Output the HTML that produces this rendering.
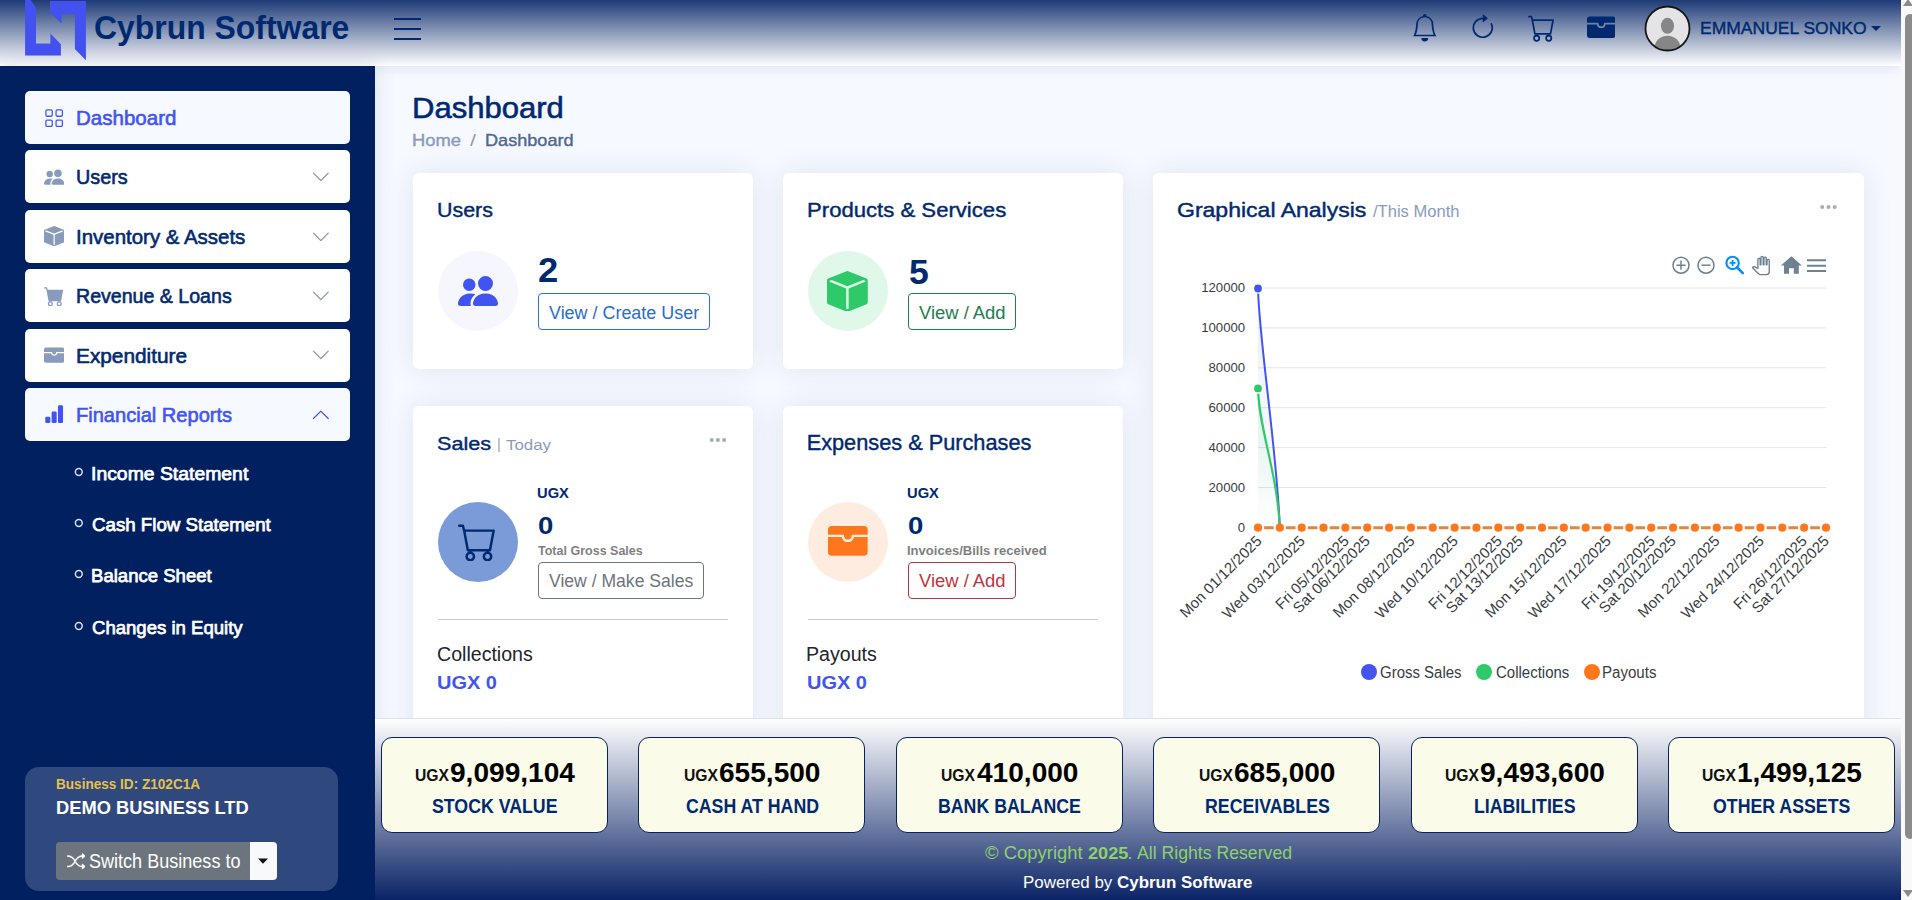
<!DOCTYPE html>
<html><head><meta charset="utf-8"><style>
html,body{margin:0;padding:0;width:1912px;height:900px;overflow:hidden;background:#f6f9ff;font-family:"Liberation Sans",sans-serif}
.abs{position:absolute}
.t{position:absolute;white-space:nowrap}
#hdr{position:absolute;left:0;top:0;width:1901px;height:66px;background:linear-gradient(to bottom,#1e3b77 0%,#ffffff 100%);box-shadow:0 2px 12px rgba(1,41,112,0.10)}
#side{position:absolute;left:0;top:66px;width:375px;height:834px;background:#012060;box-shadow:0 0 20px rgba(1,41,112,0.12)}
.card{position:absolute;background:#fff;border-radius:6px;box-shadow:0 0 30px rgba(1,41,112,0.10)}
#foot{position:absolute;left:375px;top:718px;width:1526px;height:182px;background:linear-gradient(to bottom,#ffffff 0%,#0a2366 100%);border-top:1px solid #d9e1ee;box-sizing:border-box}
.stat{position:absolute;top:737px;width:227px;height:96px;box-sizing:border-box;background:#fafbe9;border:1.5px solid #0c2158;border-radius:11px}
</style></head><body>
<div id="hdr"></div>
<svg class="abs" style="left:0;top:0" width="100" height="66" viewBox="0 0 100 66">
<polygon fill="#4351f0" points="25.1,0 30.6,0 36,7.8 36,43.5 50.4,43.5 50.4,33.4 60.9,44.3 60.9,55.6 25.1,55.6"/>
<polygon fill="#4351f0" points="50,1 85.9,1 85.9,60.3 74.9,49 74.9,14 61.6,14 61.6,23.6 50,12.6"/>
</svg>
<div class="t" style="left:94.32px;top:11.51px;font-size:32.75px;line-height:32.75px;font-weight:700;color:#012970;transform:scaleX(0.9743);transform-origin:0 0;">Cybrun Software</div>
<div class="abs" style="left:394px;top:18px;width:27px;height:2px;background:#012970"></div>
<div class="abs" style="left:394px;top:28px;width:27px;height:2px;background:#012970"></div>
<div class="abs" style="left:394px;top:38px;width:27px;height:2px;background:#012970"></div>
<svg class="abs" style="left:1410.80px;top:14.00px;" width="27.52" height="27.52" viewBox="0 0 16 16"><path fill="#012970" d="M8 16a2 2 0 0 0 2-2H6a2 2 0 0 0 2 2M8 1.918l-.797.161A4 4 0 0 0 4 6c0 .628-.134 2.197-.459 3.742-.16.767-.376 1.566-.663 2.258h10.244c-.287-.692-.502-1.49-.663-2.258C12.134 8.197 12 6.628 12 6a4 4 0 0 0-3.203-3.92zM14.22 12c.223.447.481.801.78 1H1c.299-.199.557-.553.78-1C2.68 10.2 3 6.88 3 6c0-2.42 1.72-4.44 4.005-4.901a1 1 0 1 1 1.99 0A5 5 0 0 1 13 6c0 .88.32 4.2 1.22 6"/></svg>
<svg class="abs" style="left:1468.90px;top:14.05px;" width="27.52" height="27.52" viewBox="0 0 16 16"><path fill="#012970" d="M8 3a5 5 0 1 0 4.546 2.914.5.5 0 0 1 .908-.417A6 6 0 1 1 8 2zM8 4.466V.534a.25.25 0 0 1 .41-.192l2.36 1.966c.12.1.12.284 0 .384L8.41 4.658A.25.25 0 0 1 8 4.466"/></svg>
<svg class="abs" style="left:1528.00px;top:14.10px;" width="27.68" height="27.68" viewBox="0 0 16 16"><path fill="#012970" d="M0 1.5A.5.5 0 0 1 .5 1H2a.5.5 0 0 1 .485.379L2.89 3H14.5a.5.5 0 0 1 .491.592l-1.5 8A.5.5 0 0 1 13 12H4a.5.5 0 0 1-.491-.408L2.01 3.607 1.61 2H.5a.5.5 0 0 1-.5-.5M3.102 4l1.313 7h8.17l1.313-7zM5 12a2 2 0 1 0 0 4 2 2 0 0 0 0-4m7 0a2 2 0 1 0 0 4 2 2 0 0 0 0-4m-7 1a1 1 0 1 1 0 2 1 1 0 0 1 0-2m7 0a1 1 0 1 1 0 2 1 1 0 0 1 0-2"/></svg>
<svg class="abs" style="left:1586.50px;top:13.40px;" width="28.48" height="28.48" viewBox="0 0 16 16"><path fill="#012970" d="M1.5 2A1.5 1.5 0 0 0 0 3.5v2h6a.5.5 0 0 1 .5.5c0 .253.08.644.306.958.207.288.557.542 1.194.542s.987-.254 1.194-.542C9.42 6.644 9.5 6.253 9.5 6a.5.5 0 0 1 .5-.5h6v-2A1.5 1.5 0 0 0 14.5 2zM16 6.5h-5.551a2.7 2.7 0 0 1-.443 1.042C9.613 8.088 8.963 8.5 8 8.5s-1.613-.412-2.006-.958A2.7 2.7 0 0 1 5.551 6.5H0v6A1.5 1.5 0 0 0 1.5 14h13a1.5 1.5 0 0 0 1.5-1.5z"/></svg>
<svg class="abs" style="left:1644px;top:5px" width="47" height="47" viewBox="0 0 47 47">
<defs><clipPath id="av"><circle cx="23.5" cy="23.5" r="21.5"/></clipPath></defs>
<circle cx="23.5" cy="23.5" r="22" fill="#e4e4e6"/>
<g clip-path="url(#av)" fill="#868686"><ellipse cx="23.5" cy="20.8" rx="6.6" ry="8"/><ellipse cx="23.5" cy="43.2" rx="13" ry="12.5"/></g>
<circle cx="23.5" cy="23.5" r="22" fill="none" stroke="#151515" stroke-width="1.8"/>
</svg>
<div class="t" style="left:1700.10px;top:20.31px;font-size:17.10px;line-height:17.10px;font-weight:400;color:#012970;transform:scaleX(1.0238);transform-origin:0 0;-webkit-text-stroke:0.4px currentColor;">EMMANUEL SONKO</div>
<svg class="abs" style="left:1870px;top:25px" width="12" height="7"><path d="M1 1h10L6 6z" fill="#012970"/></svg>
<div id="side"></div>
<div class="abs" style="left:25px;top:91.0px;width:325px;height:53px;background:#f6f9ff;border-radius:5px"></div>
<div class="t" style="left:75.96px;top:107.90px;font-size:20.29px;line-height:20.29px;font-weight:400;color:#4154f1;transform:scaleX(1.0117);transform-origin:0 0;-webkit-text-stroke:0.6px currentColor;">Dashboard</div>
<svg class="abs" style="left:43.80px;top:107.80px;" width="20.32" height="20.32" viewBox="0 0 16 16"><path fill="#4154f1" d="M1 2.5A1.5 1.5 0 0 1 2.5 1h3A1.5 1.5 0 0 1 7 2.5v3A1.5 1.5 0 0 1 5.5 7h-3A1.5 1.5 0 0 1 1 5.5zM2.5 2a.5.5 0 0 0-.5.5v3a.5.5 0 0 0 .5.5h3a.5.5 0 0 0 .5-.5v-3a.5.5 0 0 0-.5-.5zm6.5.5A1.5 1.5 0 0 1 10.5 1h3A1.5 1.5 0 0 1 15 2.5v3A1.5 1.5 0 0 1 13.5 7h-3A1.5 1.5 0 0 1 9 5.5zm1.5-.5a.5.5 0 0 0-.5.5v3a.5.5 0 0 0 .5.5h3a.5.5 0 0 0 .5-.5v-3a.5.5 0 0 0-.5-.5zM1 10.5A1.5 1.5 0 0 1 2.5 9h3A1.5 1.5 0 0 1 7 10.5v3A1.5 1.5 0 0 1 5.5 15h-3A1.5 1.5 0 0 1 1 13.5zm1.5-.5a.5.5 0 0 0-.5.5v3a.5.5 0 0 0 .5.5h3a.5.5 0 0 0 .5-.5v-3a.5.5 0 0 0-.5-.5zm6.5.5A1.5 1.5 0 0 1 10.5 9h3a1.5 1.5 0 0 1 1.5 1.5v3a1.5 1.5 0 0 1-1.5 1.5h-3A1.5 1.5 0 0 1 9 13.5zm1.5-.5a.5.5 0 0 0-.5.5v3a.5.5 0 0 0 .5.5h3a.5.5 0 0 0 .5-.5v-3a.5.5 0 0 0-.5-.5z"/></svg>
<div class="abs" style="left:25px;top:150.4px;width:325px;height:53px;background:#ffffff;border-radius:5px"></div>
<div class="t" style="left:76.11px;top:167.30px;font-size:20.29px;line-height:20.29px;font-weight:400;color:#012970;transform:scaleX(0.9759);transform-origin:0 0;-webkit-text-stroke:0.6px currentColor;">Users</div>
<svg class="abs" style="left:43.70px;top:167.20px;" width="20.32" height="20.32" viewBox="0 0 16 16"><path fill="#899bbd" d="M7 14s-1 0-1-1 1-4 5-4 5 3 5 4-1 1-1 1zm4-6a3 3 0 1 0 0-6 3 3 0 0 0 0 6m-5.784 6A2.24 2.24 0 0 1 5 13c0-1.355.68-2.75 1.936-3.72A6.3 6.3 0 0 0 5 9c-4 0-5 3-5 4s1 1 1 1zM4.5 8a2.5 2.5 0 1 0 0-5 2.5 2.5 0 0 0 0 5"/></svg>
<svg class="abs" style="left:311.20px;top:167.10px;" width="19.68" height="19.68" viewBox="0 0 16 16"><path fill="#8a91a8" d="M1.646 4.646a.5.5 0 0 1 .708 0L8 10.293l5.646-5.647a.5.5 0 0 1 .708.708l-6 6a.5.5 0 0 1-.708 0l-6-6a.5.5 0 0 1 0-.708"/></svg>
<div class="abs" style="left:25px;top:209.8px;width:325px;height:53px;background:#ffffff;border-radius:5px"></div>
<div class="t" style="left:75.76px;top:226.70px;font-size:20.29px;line-height:20.29px;font-weight:400;color:#012970;transform:scaleX(1.0081);transform-origin:0 0;-webkit-text-stroke:0.6px currentColor;">Inventory &amp; Assets</div>
<svg class="abs" style="left:43.60px;top:225.80px;" width="20.32" height="20.32" viewBox="0 0 16 16"><path fill="#899bbd" d="M15.528 2.973a.75.75 0 0 1 .472.696v8.662a.75.75 0 0 1-.472.696l-7.25 2.9a.75.75 0 0 1-.557 0l-7.25-2.9A.75.75 0 0 1 0 12.331V3.669a.75.75 0 0 1 .471-.696L7.443.184l.004-.001.274-.11a.75.75 0 0 1 .558 0l.274.11.004.001zm-1.374.527L8 5.962 1.846 3.5 1 3.839v.4l6.5 2.6v7.922l.5.2.5-.2V6.84l6.5-2.6v-.4l-.846-.339Z"/></svg>
<svg class="abs" style="left:311.20px;top:226.50px;" width="19.68" height="19.68" viewBox="0 0 16 16"><path fill="#8a91a8" d="M1.646 4.646a.5.5 0 0 1 .708 0L8 10.293l5.646-5.647a.5.5 0 0 1 .708.708l-6 6a.5.5 0 0 1-.708 0l-6-6a.5.5 0 0 1 0-.708"/></svg>
<div class="abs" style="left:25px;top:269.2px;width:325px;height:53px;background:#ffffff;border-radius:5px"></div>
<div class="t" style="left:76.03px;top:286.10px;font-size:20.29px;line-height:20.29px;font-weight:400;color:#012970;transform:scaleX(0.9656);transform-origin:0 0;-webkit-text-stroke:0.6px currentColor;">Revenue &amp; Loans</div>
<svg class="abs" style="left:43.90px;top:285.80px;" width="20.32" height="20.32" viewBox="0 0 16 16"><path fill="#899bbd" d="M0 1.5A.5.5 0 0 1 .5 1H2a.5.5 0 0 1 .485.379L2.89 3H14.5a.5.5 0 0 1 .491.592l-1.5 8A.5.5 0 0 1 13 12H4a.5.5 0 0 1-.491-.408L2.01 3.607 1.61 2H.5a.5.5 0 0 1-.5-.5M5 12a2 2 0 1 0 0 4 2 2 0 0 0 0-4m7 0a2 2 0 1 0 0 4 2 2 0 0 0 0-4m-7 1a1 1 0 1 1 0 2 1 1 0 0 1 0-2m7 0a1 1 0 1 1 0 2 1 1 0 0 1 0-2"/></svg>
<svg class="abs" style="left:311.20px;top:285.90px;" width="19.68" height="19.68" viewBox="0 0 16 16"><path fill="#8a91a8" d="M1.646 4.646a.5.5 0 0 1 .708 0L8 10.293l5.646-5.647a.5.5 0 0 1 .708.708l-6 6a.5.5 0 0 1-.708 0l-6-6a.5.5 0 0 1 0-.708"/></svg>
<div class="abs" style="left:25px;top:328.6px;width:325px;height:53px;background:#ffffff;border-radius:5px"></div>
<div class="t" style="left:75.93px;top:345.50px;font-size:20.29px;line-height:20.29px;font-weight:400;color:#012970;transform:scaleX(1.0264);transform-origin:0 0;-webkit-text-stroke:0.6px currentColor;">Expenditure</div>
<svg class="abs" style="left:43.60px;top:344.70px;" width="20.32" height="20.32" viewBox="0 0 16 16"><path fill="#899bbd" d="M1.5 2A1.5 1.5 0 0 0 0 3.5v2h6a.5.5 0 0 1 .5.5c0 .253.08.644.306.958.207.288.557.542 1.194.542s.987-.254 1.194-.542C9.42 6.644 9.5 6.253 9.5 6a.5.5 0 0 1 .5-.5h6v-2A1.5 1.5 0 0 0 14.5 2zM16 6.5h-5.551a2.7 2.7 0 0 1-.443 1.042C9.613 8.088 8.963 8.5 8 8.5s-1.613-.412-2.006-.958A2.7 2.7 0 0 1 5.551 6.5H0v6A1.5 1.5 0 0 0 1.5 14h13a1.5 1.5 0 0 0 1.5-1.5z"/></svg>
<svg class="abs" style="left:311.20px;top:345.30px;" width="19.68" height="19.68" viewBox="0 0 16 16"><path fill="#8a91a8" d="M1.646 4.646a.5.5 0 0 1 .708 0L8 10.293l5.646-5.647a.5.5 0 0 1 .708.708l-6 6a.5.5 0 0 1-.708 0l-6-6a.5.5 0 0 1 0-.708"/></svg>
<div class="abs" style="left:25px;top:388.0px;width:325px;height:53px;background:#f6f9ff;border-radius:5px"></div>
<div class="t" style="left:75.99px;top:404.90px;font-size:20.29px;line-height:20.29px;font-weight:400;color:#4154f1;transform:scaleX(0.9889);transform-origin:0 0;-webkit-text-stroke:0.6px currentColor;">Financial Reports</div>
<svg class="abs" style="left:43.80px;top:404.40px;" width="20.32" height="20.32" viewBox="0 0 16 16"><path fill="#4154f1" d="M1 11a1 1 0 0 1 1-1h2a1 1 0 0 1 1 1v3a1 1 0 0 1-1 1H2a1 1 0 0 1-1-1zm5-4a1 1 0 0 1 1-1h2a1 1 0 0 1 1 1v7a1 1 0 0 1-1 1H7a1 1 0 0 1-1-1zm5-5a1 1 0 0 1 1-1h2a1 1 0 0 1 1 1v12a1 1 0 0 1-1 1h-2a1 1 0 0 1-1-1z"/></svg>
<svg class="abs" style="left:311.20px;top:404.70px;" width="19.68" height="19.68" viewBox="0 0 16 16"><path fill="#4154f1" d="M7.646 4.646a.5.5 0 0 1 .708 0l6 6a.5.5 0 0 1-.708.708L8 5.707l-5.646 5.647a.5.5 0 0 1-.708-.708z"/></svg>
<div class="t" style="left:90.75px;top:463.97px;font-size:19.28px;line-height:19.28px;font-weight:400;color:#ffffff;transform:scaleX(1.0059);transform-origin:0 0;-webkit-text-stroke:0.75px currentColor;">Income Statement</div>
<svg class="abs" style="left:72px;top:464.0px" width="14" height="14"><circle cx="6.8" cy="8" r="3.4" fill="none" stroke="#d5e0f5" stroke-width="1.5"/></svg>
<div class="t" style="left:91.56px;top:515.07px;font-size:19.28px;line-height:19.28px;font-weight:400;color:#ffffff;transform:scaleX(0.9704);transform-origin:0 0;-webkit-text-stroke:0.75px currentColor;">Cash Flow Statement</div>
<svg class="abs" style="left:72px;top:515.1px" width="14" height="14"><circle cx="6.8" cy="8" r="3.4" fill="none" stroke="#d5e0f5" stroke-width="1.5"/></svg>
<div class="t" style="left:91.01px;top:565.67px;font-size:19.28px;line-height:19.28px;font-weight:400;color:#ffffff;transform:scaleX(0.9632);transform-origin:0 0;-webkit-text-stroke:0.75px currentColor;">Balance Sheet</div>
<svg class="abs" style="left:72px;top:565.7px" width="14" height="14"><circle cx="6.8" cy="8" r="3.4" fill="none" stroke="#d5e0f5" stroke-width="1.5"/></svg>
<div class="t" style="left:91.57px;top:617.67px;font-size:19.28px;line-height:19.28px;font-weight:400;color:#ffffff;transform:scaleX(0.9630);transform-origin:0 0;-webkit-text-stroke:0.75px currentColor;">Changes in Equity</div>
<svg class="abs" style="left:72px;top:617.7px" width="14" height="14"><circle cx="6.8" cy="8" r="3.4" fill="none" stroke="#d5e0f5" stroke-width="1.5"/></svg>
<div class="abs" style="left:25px;top:767px;width:313px;height:124px;background:#2f487d;border-radius:14px"></div>
<div class="t" style="left:56.22px;top:777.03px;font-size:14.49px;line-height:14.49px;font-weight:700;color:#e4c24b;transform:scaleX(0.9368);transform-origin:0 0;">Business ID: Z102C1A</div>
<div class="t" style="left:55.81px;top:798.47px;font-size:19.28px;line-height:19.28px;font-weight:700;color:#ffffff;transform:scaleX(0.9491);transform-origin:0 0;">DEMO BUSINESS LTD</div>
<div class="abs" style="left:56px;top:842px;width:194px;height:38px;background:#6c757d;border-radius:4px 0 0 4px"></div>
<div class="abs" style="left:250px;top:842px;width:27px;height:38px;background:#f8f9fa;border-radius:0 4px 4px 0"></div>
<svg class="abs" style="left:257px;top:858px" width="12" height="7"><path d="M1 0.5h10L6 5.8z" fill="#111"/></svg>
<div class="t" style="left:89.19px;top:851.74px;font-size:19.42px;line-height:19.42px;font-weight:400;color:#ffffff;transform:scaleX(0.9300);transform-origin:0 0;">Switch Business to</div>
<svg class="abs" style="left:66.70px;top:851.80px;" width="18.56" height="18.56" viewBox="0 0 16 16"><path stroke="#fff" stroke-width="0.35" fill="#ffffff" d="M0 3.5A.5.5 0 0 1 .5 3H1c2.202 0 3.827 1.24 4.874 2.418.49.552.865 1.102 1.126 1.532.26-.43.636-.98 1.126-1.532C9.173 4.24 10.798 3 13 3v1c-1.798 0-3.173 1.01-4.126 2.082A9.6 9.6 0 0 0 7.556 8a9.6 9.6 0 0 0 1.317 1.918C9.828 10.99 11.204 12 13 12v1c-2.202 0-3.827-1.24-4.874-2.418A10.6 10.6 0 0 1 7 9.05c-.26.43-.636.98-1.126 1.532C4.827 11.76 3.202 13 1 13H.5a.5.5 0 0 1 0-1H1c1.798 0 3.173-1.01 4.126-2.082A9.6 9.6 0 0 0 6.444 8a9.6 9.6 0 0 0-1.317-1.918C4.172 5.01 2.796 4 1 4H.5a.5.5 0 0 1-.5-.5M13 5.466V1.534a.25.25 0 0 1 .41-.192l2.36 1.966c.12.1.12.284 0 .384l-2.36 1.966a.25.25 0 0 1-.41-.192m0 9v-3.932a.25.25 0 0 1 .41-.192l2.36 1.966c.12.1.12.284 0 .384l-2.36 1.966a.25.25 0 0 1-.41-.192"/></svg>
<div class="t" style="left:411.52px;top:92.95px;font-size:30.00px;line-height:30.00px;font-weight:400;color:#012970;transform:scaleX(1.0348);transform-origin:0 0;-webkit-text-stroke:0.6px currentColor;">Dashboard</div>
<div class="t" style="left:411.83px;top:131.67px;font-size:17.39px;line-height:17.39px;font-weight:400;color:#899bbd;transform:scaleX(1.0572);transform-origin:0 0;-webkit-text-stroke:0.4px currentColor;">Home</div>
<div class="t" style="left:470.00px;top:131.67px;font-size:17.39px;line-height:17.39px;font-weight:400;color:#899bbd;transform:scaleX(1.2321);transform-origin:0 0;">/</div>
<div class="t" style="left:485.25px;top:131.67px;font-size:17.39px;line-height:17.39px;font-weight:400;color:#51678f;transform:scaleX(1.0421);transform-origin:0 0;-webkit-text-stroke:0.4px currentColor;">Dashboard</div>
<div class="card" style="left:413px;top:173px;width:340px;height:196px"></div>
<div class="card" style="left:783px;top:173px;width:340px;height:196px"></div>
<div class="card" style="left:413px;top:406px;width:340px;height:340px"></div>
<div class="card" style="left:783px;top:406px;width:340px;height:340px"></div>
<div class="card" style="left:1153px;top:173px;width:711px;height:573px"></div>
<div class="t" style="left:436.79px;top:200.74px;font-size:19.42px;line-height:19.42px;font-weight:400;color:#012970;transform:scaleX(1.1040);transform-origin:0 0;-webkit-text-stroke:0.4px currentColor;">Users</div>
<div class="abs" style="left:438px;top:251px;width:80px;height:80px;border-radius:50%;background:#f6f6fe"></div>
<svg class="abs" style="left:457.70px;top:271.20px;" width="40.00" height="40.00" viewBox="0 0 16 16"><path fill="#4154f1" d="M7 14s-1 0-1-1 1-4 5-4 5 3 5 4-1 1-1 1zm4-6a3 3 0 1 0 0-6 3 3 0 0 0 0 6m-5.784 6A2.24 2.24 0 0 1 5 13c0-1.355.68-2.75 1.936-3.72A6.3 6.3 0 0 0 5 9c-4 0-5 3-5 4s1 1 1 1zM4.5 8a2.5 2.5 0 1 0 0-5 2.5 2.5 0 0 0 0 5"/></svg>
<div class="t" style="left:538.42px;top:252.87px;font-size:35.86px;line-height:35.86px;font-weight:700;color:#012970;transform:scaleX(1.0168);transform-origin:0 0;">2</div>
<div class="abs" style="left:538px;top:293px;width:170px;height:35px;border:1px solid #2f6fd1;border-radius:4px"></div>
<div class="t" style="left:548.81px;top:303.83px;font-size:18.26px;line-height:18.26px;font-weight:400;color:#2a6bd0;transform:scaleX(0.9824);transform-origin:0 0;">View / Create User</div>
<div class="t" style="left:806.93px;top:199.95px;font-size:20.00px;line-height:20.00px;font-weight:400;color:#012970;transform:scaleX(1.1063);transform-origin:0 0;-webkit-text-stroke:0.4px currentColor;">Products &amp; Services</div>
<div class="abs" style="left:808px;top:251px;width:80px;height:80px;border-radius:50%;background:#e0f8e9"></div>
<svg class="abs" style="left:827.30px;top:270.60px;" width="40.80" height="40.80" viewBox="0 0 16 16"><path fill="#2eca6a" d="M15.528 2.973a.75.75 0 0 1 .472.696v8.662a.75.75 0 0 1-.472.696l-7.25 2.9a.75.75 0 0 1-.557 0l-7.25-2.9A.75.75 0 0 1 0 12.331V3.669a.75.75 0 0 1 .471-.696L7.443.184l.004-.001.274-.11a.75.75 0 0 1 .558 0l.274.11.004.001zm-1.374.527L8 5.962 1.846 3.5 1 3.839v.4l6.5 2.6v7.922l.5.2.5-.2V6.84l6.5-2.6v-.4l-.846-.339Z"/></svg>
<div class="t" style="left:908.93px;top:253.78px;font-size:35.14px;line-height:35.14px;font-weight:700;color:#012970;transform:scaleX(1.0130);transform-origin:0 0;">5</div>
<div class="abs" style="left:908px;top:293px;width:106px;height:35px;border:1px solid #1d7e4f;border-radius:4px"></div>
<div class="t" style="left:919.21px;top:303.83px;font-size:18.26px;line-height:18.26px;font-weight:400;color:#1f7c4f;transform:scaleX(1.0078);transform-origin:0 0;">View / Add</div>
<div class="t" style="left:437.43px;top:434.27px;font-size:19.28px;line-height:19.28px;font-weight:400;color:#012970;transform:scaleX(1.1233);transform-origin:0 0;-webkit-text-stroke:0.4px currentColor;">Sales</div>
<div class="t" style="left:496.89px;top:436.62px;font-size:14.50px;line-height:14.50px;font-weight:400;color:#9aa3b8;">|</div>
<div class="t" style="left:505.66px;top:438.08px;font-size:14.78px;line-height:14.78px;font-weight:400;color:#899bbd;transform:scaleX(1.1436);transform-origin:0 0;">Today</div>
<svg class="abs" style="left:700px;top:430px" width="40" height="20"><g fill="#a4adbe"><circle cx="11.7" cy="10" r="2.05"/><circle cx="17.9" cy="10" r="2.05"/><circle cx="24.1" cy="10" r="2.05"/></g></svg>
<div class="abs" style="left:438px;top:502px;width:80px;height:80px;border-radius:50%;background:#7a9bd7"></div>
<svg class="abs" style="left:457.90px;top:522.10px;" width="39.36" height="39.36" viewBox="0 0 16 16"><path fill="#012970" d="M0 1.5A.5.5 0 0 1 .5 1H2a.5.5 0 0 1 .485.379L2.89 3H14.5a.5.5 0 0 1 .491.592l-1.5 8A.5.5 0 0 1 13 12H4a.5.5 0 0 1-.491-.408L2.01 3.607 1.61 2H.5a.5.5 0 0 1-.5-.5M3.102 4l1.313 7h8.17l1.313-7zM5 12a2 2 0 1 0 0 4 2 2 0 0 0 0-4m7 0a2 2 0 1 0 0 4 2 2 0 0 0 0-4m-7 1a1 1 0 1 1 0 2 1 1 0 0 1 0-2m7 0a1 1 0 1 1 0 2 1 1 0 0 1 0-2"/></svg>
<div class="t" style="left:537.22px;top:485.71px;font-size:14.64px;line-height:14.64px;font-weight:700;color:#012970;transform:scaleX(1.0076);transform-origin:0 0;">UGX</div>
<div class="t" style="left:537.70px;top:514.43px;font-size:24.14px;line-height:24.14px;font-weight:700;color:#012970;transform:scaleX(1.1423);transform-origin:0 0;">0</div>
<div class="t" style="left:537.87px;top:544.80px;font-size:12.17px;line-height:12.17px;font-weight:700;color:#7f7f7f;transform:scaleX(1.0291);transform-origin:0 0;">Total Gross Sales</div>
<div class="abs" style="left:538px;top:561.5px;width:164px;height:35px;border:1px solid #6c757d;border-radius:4px"></div>
<div class="t" style="left:549.21px;top:571.73px;font-size:18.26px;line-height:18.26px;font-weight:400;color:#6c757d;transform:scaleX(0.9632);transform-origin:0 0;">View / Make Sales</div>
<div class="abs" style="left:438px;top:618.5px;width:290px;height:1.3px;background:#c9ccd0"></div>
<div class="t" style="left:437.02px;top:644.45px;font-size:20.00px;line-height:20.00px;font-weight:400;color:#212529;transform:scaleX(0.9792);transform-origin:0 0;">Collections</div>
<div class="t" style="left:437.30px;top:673.74px;font-size:18.84px;line-height:18.84px;font-weight:700;color:#4154f1;transform:scaleX(1.0615);transform-origin:0 0;">UGX 0</div>
<div class="t" style="left:806.66px;top:432.47px;font-size:21.74px;line-height:21.74px;font-weight:400;color:#012970;-webkit-text-stroke:0.4px currentColor;">Expenses &amp; Purchases</div>
<div class="abs" style="left:808px;top:502px;width:80px;height:80px;border-radius:50%;background:#ffece0"></div>
<svg class="abs" style="left:828.00px;top:521.20px;" width="39.68" height="39.68" viewBox="0 0 16 16"><path fill="#ff771d" d="M1.5 2A1.5 1.5 0 0 0 0 3.5v2h6a.5.5 0 0 1 .5.5c0 .253.08.644.306.958.207.288.557.542 1.194.542s.987-.254 1.194-.542C9.42 6.644 9.5 6.253 9.5 6a.5.5 0 0 1 .5-.5h6v-2A1.5 1.5 0 0 0 14.5 2zM16 6.5h-5.551a2.7 2.7 0 0 1-.443 1.042C9.613 8.088 8.963 8.5 8 8.5s-1.613-.412-2.006-.958A2.7 2.7 0 0 1 5.551 6.5H0v6A1.5 1.5 0 0 0 1.5 14h13a1.5 1.5 0 0 0 1.5-1.5z"/></svg>
<div class="t" style="left:907.22px;top:485.71px;font-size:14.64px;line-height:14.64px;font-weight:700;color:#012970;transform:scaleX(1.0076);transform-origin:0 0;">UGX</div>
<div class="t" style="left:907.70px;top:514.43px;font-size:24.14px;line-height:24.14px;font-weight:700;color:#012970;transform:scaleX(1.1423);transform-origin:0 0;">0</div>
<div class="t" style="left:907.15px;top:544.80px;font-size:12.17px;line-height:12.17px;font-weight:700;color:#7f7f7f;transform:scaleX(1.0715);transform-origin:0 0;">Invoices/Bills received</div>
<div class="abs" style="left:908px;top:561.5px;width:106px;height:35px;border:1px solid #b8343e;border-radius:4px"></div>
<div class="t" style="left:919.21px;top:571.73px;font-size:18.26px;line-height:18.26px;font-weight:400;color:#bd3440;transform:scaleX(1.0078);transform-origin:0 0;">View / Add</div>
<div class="abs" style="left:808px;top:618.5px;width:290px;height:1.3px;background:#c9ccd0"></div>
<div class="t" style="left:806.43px;top:644.45px;font-size:20.00px;line-height:20.00px;font-weight:400;color:#212529;transform:scaleX(0.9800);transform-origin:0 0;">Payouts</div>
<div class="t" style="left:807.30px;top:673.74px;font-size:18.84px;line-height:18.84px;font-weight:700;color:#4154f1;transform:scaleX(1.0615);transform-origin:0 0;">UGX 0</div>
<div class="t" style="left:1177.45px;top:200.64px;font-size:19.42px;line-height:19.42px;font-weight:400;color:#012970;transform:scaleX(1.1861);transform-origin:0 0;-webkit-text-stroke:0.4px currentColor;">Graphical Analysis</div>
<div class="t" style="left:1373.20px;top:203.60px;font-size:15.94px;line-height:15.94px;font-weight:400;color:#899bbd;transform:scaleX(1.0394);transform-origin:0 0;">/This Month</div>
<svg class="abs" style="left:1810px;top:197px" width="40" height="20"><g fill="#a4adbe"><circle cx="12.2" cy="10" r="2.05"/><circle cx="18.5" cy="10" r="2.05"/><circle cx="24.7" cy="10" r="2.05"/></g></svg>
<svg class="abs" style="left:0;top:0" width="1901" height="900" viewBox="0 0 1901 900"><line x1="1258" x2="1826" y1="288.0" y2="288.0" stroke="#e4e4e4" stroke-width="1"/><line x1="1258" x2="1826" y1="327.9" y2="327.9" stroke="#e4e4e4" stroke-width="1"/><line x1="1258" x2="1826" y1="367.8" y2="367.8" stroke="#e4e4e4" stroke-width="1"/><line x1="1258" x2="1826" y1="407.7" y2="407.7" stroke="#e4e4e4" stroke-width="1"/><line x1="1258" x2="1826" y1="447.6" y2="447.6" stroke="#e4e4e4" stroke-width="1"/><line x1="1258" x2="1826" y1="487.5" y2="487.5" stroke="#e4e4e4" stroke-width="1"/><line x1="1258" x2="1826" y1="527.4" y2="527.4" stroke="#e4e4e4" stroke-width="1"/></svg>

<div class="t" style="left:1201.14px;top:281.38px;font-size:13.2px;line-height:13.2px;color:#373d3f">120000</div>

<div class="t" style="left:1201.14px;top:321.28px;font-size:13.2px;line-height:13.2px;color:#373d3f">100000</div>

<div class="t" style="left:1208.47px;top:361.18px;font-size:13.2px;line-height:13.2px;color:#373d3f">80000</div>

<div class="t" style="left:1208.47px;top:401.08px;font-size:13.2px;line-height:13.2px;color:#373d3f">60000</div>

<div class="t" style="left:1208.47px;top:440.98px;font-size:13.2px;line-height:13.2px;color:#373d3f">40000</div>

<div class="t" style="left:1208.47px;top:480.88px;font-size:13.2px;line-height:13.2px;color:#373d3f">20000</div>

<div class="t" style="left:1237.84px;top:520.78px;font-size:13.2px;line-height:13.2px;color:#373d3f">0</div>
<svg class="abs" style="left:0;top:0" width="1901" height="900" viewBox="0 0 1901 900"><defs><linearGradient id="gb" x1="0" y1="0" x2="0" y2="1"><stop offset="0" stop-color="#4154f1" stop-opacity="0.10"/><stop offset="1" stop-color="#4154f1" stop-opacity="0"/></linearGradient><linearGradient id="gg" x1="0" y1="0" x2="0" y2="1"><stop offset="0" stop-color="#2eca6a" stop-opacity="0.12"/><stop offset="1" stop-color="#2eca6a" stop-opacity="0"/></linearGradient></defs><path d="M1258.0,288.5 C1259,340 1277,450 1279.8,527.7 L1258.0,527.7 Z" fill="url(#gb)"/><path d="M1258.0,388.4 C1259,430 1277,470 1279.8,527.7 L1258.0,527.7 Z" fill="url(#gg)"/><path d="M1258.0,288.5 C1259,340 1277,450 1279.8,527.7 L1826,527.7" fill="none" stroke="#4154f1" stroke-width="2"/><path d="M1258.0,388.4 C1259,430 1277,470 1279.8,527.7 L1826,527.7" fill="none" stroke="#2eca6a" stroke-width="2.2"/><line x1="1258.0" x2="1826" y1="527.7" y2="527.7" stroke="#fff" stroke-width="3.5"/><line x1="1258.0" x2="1826" y1="527.7" y2="527.7" stroke="#e0873e" stroke-width="3" stroke-dasharray="9.6 12.246" stroke-dashoffset="-6.1"/><circle cx="1258.00" cy="527.7" r="4.1" fill="#ff771d"/><circle cx="1279.85" cy="527.7" r="4.1" fill="#ff771d"/><circle cx="1301.69" cy="527.7" r="4.1" fill="#ff771d"/><circle cx="1323.54" cy="527.7" r="4.1" fill="#ff771d"/><circle cx="1345.38" cy="527.7" r="4.1" fill="#ff771d"/><circle cx="1367.23" cy="527.7" r="4.1" fill="#ff771d"/><circle cx="1389.08" cy="527.7" r="4.1" fill="#ff771d"/><circle cx="1410.92" cy="527.7" r="4.1" fill="#ff771d"/><circle cx="1432.77" cy="527.7" r="4.1" fill="#ff771d"/><circle cx="1454.62" cy="527.7" r="4.1" fill="#ff771d"/><circle cx="1476.46" cy="527.7" r="4.1" fill="#ff771d"/><circle cx="1498.31" cy="527.7" r="4.1" fill="#ff771d"/><circle cx="1520.15" cy="527.7" r="4.1" fill="#ff771d"/><circle cx="1542.00" cy="527.7" r="4.1" fill="#ff771d"/><circle cx="1563.85" cy="527.7" r="4.1" fill="#ff771d"/><circle cx="1585.69" cy="527.7" r="4.1" fill="#ff771d"/><circle cx="1607.54" cy="527.7" r="4.1" fill="#ff771d"/><circle cx="1629.38" cy="527.7" r="4.1" fill="#ff771d"/><circle cx="1651.23" cy="527.7" r="4.1" fill="#ff771d"/><circle cx="1673.08" cy="527.7" r="4.1" fill="#ff771d"/><circle cx="1694.92" cy="527.7" r="4.1" fill="#ff771d"/><circle cx="1716.77" cy="527.7" r="4.1" fill="#ff771d"/><circle cx="1738.62" cy="527.7" r="4.1" fill="#ff771d"/><circle cx="1760.46" cy="527.7" r="4.1" fill="#ff771d"/><circle cx="1782.31" cy="527.7" r="4.1" fill="#ff771d"/><circle cx="1804.15" cy="527.7" r="4.1" fill="#ff771d"/><circle cx="1826.00" cy="527.7" r="4.1" fill="#ff771d"/><circle cx="1258.0" cy="288.5" r="4.6" fill="#4154f1" stroke="#fff" stroke-width="1.4"/><circle cx="1258.0" cy="388.4" r="4.6" fill="#2eca6a" stroke="#fff" stroke-width="1.4"/></svg>
<div class="t" style="left:1153.58px;top:529.25px;font-size:15.0px;line-height:15.0px;color:#373d3f;transform:rotate(-45deg);transform-origin:108.42px 12.75px">Mon 01/12/2025</div>
<div class="t" style="left:1195.88px;top:529.25px;font-size:15.0px;line-height:15.0px;color:#373d3f;transform:rotate(-45deg);transform-origin:109.81px 12.75px">Wed 03/12/2025</div>
<div class="t" style="left:1252.65px;top:529.25px;font-size:15.0px;line-height:15.0px;color:#373d3f;transform:rotate(-45deg);transform-origin:96.73px 12.75px">Fri 05/12/2025</div>
<div class="t" style="left:1269.47px;top:529.25px;font-size:15.0px;line-height:15.0px;color:#373d3f;transform:rotate(-45deg);transform-origin:101.76px 12.75px">Sat 06/12/2025</div>
<div class="t" style="left:1306.50px;top:529.25px;font-size:15.0px;line-height:15.0px;color:#373d3f;transform:rotate(-45deg);transform-origin:108.42px 12.75px">Mon 08/12/2025</div>
<div class="t" style="left:1348.80px;top:529.25px;font-size:15.0px;line-height:15.0px;color:#373d3f;transform:rotate(-45deg);transform-origin:109.81px 12.75px">Wed 10/12/2025</div>
<div class="t" style="left:1405.57px;top:529.25px;font-size:15.0px;line-height:15.0px;color:#373d3f;transform:rotate(-45deg);transform-origin:96.73px 12.75px">Fri 12/12/2025</div>
<div class="t" style="left:1422.40px;top:529.25px;font-size:15.0px;line-height:15.0px;color:#373d3f;transform:rotate(-45deg);transform-origin:101.76px 12.75px">Sat 13/12/2025</div>
<div class="t" style="left:1459.42px;top:529.25px;font-size:15.0px;line-height:15.0px;color:#373d3f;transform:rotate(-45deg);transform-origin:108.42px 12.75px">Mon 15/12/2025</div>
<div class="t" style="left:1501.72px;top:529.25px;font-size:15.0px;line-height:15.0px;color:#373d3f;transform:rotate(-45deg);transform-origin:109.81px 12.75px">Wed 17/12/2025</div>
<div class="t" style="left:1558.50px;top:529.25px;font-size:15.0px;line-height:15.0px;color:#373d3f;transform:rotate(-45deg);transform-origin:96.73px 12.75px">Fri 19/12/2025</div>
<div class="t" style="left:1575.32px;top:529.25px;font-size:15.0px;line-height:15.0px;color:#373d3f;transform:rotate(-45deg);transform-origin:101.76px 12.75px">Sat 20/12/2025</div>
<div class="t" style="left:1612.35px;top:529.25px;font-size:15.0px;line-height:15.0px;color:#373d3f;transform:rotate(-45deg);transform-origin:108.42px 12.75px">Mon 22/12/2025</div>
<div class="t" style="left:1654.65px;top:529.25px;font-size:15.0px;line-height:15.0px;color:#373d3f;transform:rotate(-45deg);transform-origin:109.81px 12.75px">Wed 24/12/2025</div>
<div class="t" style="left:1711.42px;top:529.25px;font-size:15.0px;line-height:15.0px;color:#373d3f;transform:rotate(-45deg);transform-origin:96.73px 12.75px">Fri 26/12/2025</div>
<div class="t" style="left:1728.24px;top:529.25px;font-size:15.0px;line-height:15.0px;color:#373d3f;transform:rotate(-45deg);transform-origin:101.76px 12.75px">Sat 27/12/2025</div>
<div class="abs" style="left:1361.0px;top:663.7px;width:16px;height:16px;border-radius:50%;background:#4154f1"></div>
<div class="t" style="left:1380.25px;top:664.62px;font-size:15.80px;line-height:15.80px;font-weight:400;color:#373d3f;transform:scaleX(0.9484);transform-origin:0 0;">Gross Sales</div>
<div class="abs" style="left:1476.0px;top:663.7px;width:16px;height:16px;border-radius:50%;background:#2eca6a"></div>
<div class="t" style="left:1495.65px;top:664.62px;font-size:15.80px;line-height:15.80px;font-weight:400;color:#373d3f;transform:scaleX(0.9486);transform-origin:0 0;">Collections</div>
<div class="abs" style="left:1583.8px;top:663.7px;width:16px;height:16px;border-radius:50%;background:#ff771d"></div>
<div class="t" style="left:1602.40px;top:664.62px;font-size:15.80px;line-height:15.80px;font-weight:400;color:#373d3f;transform:scaleX(0.9532);transform-origin:0 0;">Payouts</div>
<svg class="abs" style="left:1665px;top:250px" width="170" height="30" viewBox="0 0 170 30">
<g fill="none" stroke="#6e8192" stroke-width="1.5"><circle cx="16" cy="15.2" r="8"/><path d="M16 10.6v9.2M11.4 15.2h9.2"/>
<circle cx="41" cy="15.2" r="8"/><path d="M36.4 15.2h9.2"/></g>
<g fill="none" stroke="#008ffb" stroke-width="2.1"><circle cx="67.6" cy="12.9" r="6.2"/><path d="M72.2 17.5l5.6 5.6" stroke-width="2.6" stroke-linecap="round"/>
<path d="M67.6 9.9v6M64.6 12.9h6" stroke-width="1.8"/></g>
<g transform="translate(86.8 6.4) scale(0.76)"><path d="M23 5.5V20c0 2.2-1.8 4-4 4h-7.3c-1.08 0-2.1-.43-2.850-1.19L1 14.83s1.26-1.230 1.3-1.25c.22-.19.49-.29.79-.29.22 0 .42.06.6.16.04.01 4.31 2.46 4.31 2.46V4c0-.83.67-1.5 1.5-1.5S11 3.17 11 4v7h1V1.5c0-.83.67-1.5 1.5-1.5S15 .67 15 1.5V11h1V2.5c0-.83.67-1.5 1.5-1.5s1.5.67 1.5 1.5V11h1V5.5c0-.83.67-1.5 1.5-1.5s1.5.67 1.5 1.5z" fill="#fff" stroke="#6e8192" stroke-width="1.8" stroke-linejoin="round"/></g>
<path d="M126.4 6.2l10.5 9.3h-3.1v8.3h-5v-5.5h-4.8v5.5h-5v-8.3h-3.1z" fill="#6e8192"/>
<path d="M142 10.2h19M142 15.7h19M142 21.1h19" stroke="#6e8192" stroke-width="2"/>
</svg>
<div id="foot"></div>
<div class="stat" style="left:381.0px"></div>
<div class="t" style="left:414.76px;top:768.30px;font-size:15.94px;line-height:15.94px;font-weight:700;color:#111111;transform:scaleX(0.9851);transform-origin:0 0;">UGX</div>
<div class="t" style="left:449.72px;top:758.66px;font-size:27.29px;line-height:27.29px;font-weight:700;color:#000000;transform:scaleX(1.0288);transform-origin:0 0;">9,099,104</div>
<div class="t" style="left:432.47px;top:796.54px;font-size:19.42px;line-height:19.42px;font-weight:700;color:#012970;transform:scaleX(0.9138);transform-origin:0 0;">STOCK VALUE</div>
<div class="stat" style="left:638.4px"></div>
<div class="t" style="left:684.37px;top:768.30px;font-size:15.94px;line-height:15.94px;font-weight:700;color:#111111;transform:scaleX(0.9851);transform-origin:0 0;">UGX</div>
<div class="t" style="left:719.33px;top:758.66px;font-size:27.29px;line-height:27.29px;font-weight:700;color:#000000;transform:scaleX(1.0288);transform-origin:0 0;">655,500</div>
<div class="t" style="left:686.05px;top:796.54px;font-size:19.42px;line-height:19.42px;font-weight:700;color:#012970;transform:scaleX(0.9138);transform-origin:0 0;">CASH AT HAND</div>
<div class="stat" style="left:895.8px"></div>
<div class="t" style="left:941.49px;top:768.30px;font-size:15.94px;line-height:15.94px;font-weight:700;color:#111111;transform:scaleX(0.9851);transform-origin:0 0;">UGX</div>
<div class="t" style="left:977.01px;top:758.66px;font-size:27.29px;line-height:27.29px;font-weight:700;color:#000000;transform:scaleX(1.0288);transform-origin:0 0;">410,000</div>
<div class="t" style="left:938.26px;top:796.54px;font-size:19.42px;line-height:19.42px;font-weight:700;color:#012970;transform:scaleX(0.9138);transform-origin:0 0;">BANK BALANCE</div>
<div class="stat" style="left:1153.2px"></div>
<div class="t" style="left:1199.17px;top:768.30px;font-size:15.94px;line-height:15.94px;font-weight:700;color:#111111;transform:scaleX(0.9851);transform-origin:0 0;">UGX</div>
<div class="t" style="left:1234.13px;top:758.66px;font-size:27.29px;line-height:27.29px;font-weight:700;color:#000000;transform:scaleX(1.0288);transform-origin:0 0;">685,000</div>
<div class="t" style="left:1204.71px;top:796.54px;font-size:19.42px;line-height:19.42px;font-weight:700;color:#012970;transform:scaleX(0.9138);transform-origin:0 0;">RECEIVABLES</div>
<div class="stat" style="left:1410.6px"></div>
<div class="t" style="left:1444.85px;top:768.30px;font-size:15.94px;line-height:15.94px;font-weight:700;color:#111111;transform:scaleX(0.9851);transform-origin:0 0;">UGX</div>
<div class="t" style="left:1479.81px;top:758.66px;font-size:27.29px;line-height:27.29px;font-weight:700;color:#000000;transform:scaleX(1.0288);transform-origin:0 0;">9,493,600</div>
<div class="t" style="left:1473.78px;top:796.54px;font-size:19.42px;line-height:19.42px;font-weight:700;color:#012970;transform:scaleX(0.9138);transform-origin:0 0;">LIABILITIES</div>
<div class="stat" style="left:1668.0px"></div>
<div class="t" style="left:1702.39px;top:768.30px;font-size:15.94px;line-height:15.94px;font-weight:700;color:#111111;transform:scaleX(0.9851);transform-origin:0 0;">UGX</div>
<div class="t" style="left:1736.65px;top:758.66px;font-size:27.29px;line-height:27.29px;font-weight:700;color:#000000;transform:scaleX(1.0288);transform-origin:0 0;">1,499,125</div>
<div class="t" style="left:1713.48px;top:796.54px;font-size:19.42px;line-height:19.42px;font-weight:700;color:#012970;transform:scaleX(0.9138);transform-origin:0 0;">OTHER ASSETS</div>
<div class="t" style="left:985.32px;top:845.04px;font-size:17.54px;line-height:17.54px;font-weight:400;color:#8fd16a;transform:scaleX(1.0528);transform-origin:0 0;">&#169; Copyright</div>
<div class="t" style="left:1087.57px;top:845.26px;font-size:17.29px;line-height:17.29px;font-weight:700;color:#8fd16a;transform:scaleX(1.0475);transform-origin:0 0;">2025</div>
<div class="t" style="left:1127.52px;top:845.08px;font-size:17.50px;line-height:17.50px;font-weight:400;color:#8fd16a;">.</div>
<div class="t" style="left:1137.10px;top:845.04px;font-size:17.54px;line-height:17.54px;font-weight:400;color:#8fd16a;transform:scaleX(1.0070);transform-origin:0 0;">All Rights Reserved</div>
<div class="t" style="left:1022.85px;top:875.48px;font-size:16.67px;line-height:16.67px;font-weight:400;color:#ffffff;transform:scaleX(1.0154);transform-origin:0 0;">Powered by</div>
<div class="t" style="left:1116.92px;top:875.48px;font-size:16.67px;line-height:16.67px;font-weight:700;color:#ffffff;transform:scaleX(1.0160);transform-origin:0 0;">Cybrun Software</div>
<div class="abs" style="left:1901px;top:0;width:11px;height:900px;background:#f9f9f9"></div>
<div class="abs" style="left:1905px;top:14px;width:10px;height:825px;background:#8b8b8b;border-radius:5px"></div>
<svg class="abs" style="left:1903px;top:0" width="9" height="8"><path d="M5 -1L10 6H0z" fill="#8b8b8b"/></svg>
<svg class="abs" style="left:1903px;top:889px" width="9" height="11"><path d="M0 1H10L5 8z" fill="#8b8b8b"/></svg>
</body></html>
